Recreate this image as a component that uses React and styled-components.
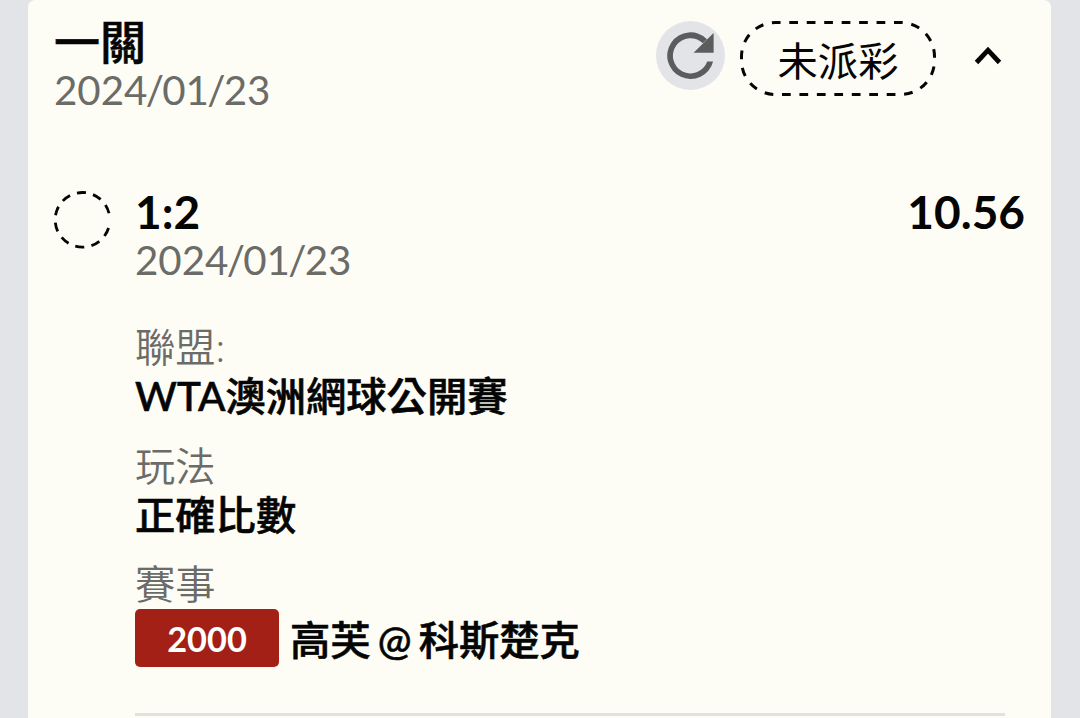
import { Fragment, useState } from 'react';
import styled, { createGlobalStyle } from 'styled-components';

const palette = {
  page: '#e3e4e7',
  card: '#fdfdf5',
  text: '#050505',
  muted: '#6b6b68',
  icon: '#5c5c5e',
  red: '#a32017',
  line: '#e2e2dd',
};

const GlobalStyle = createGlobalStyle`
  * {
    box-sizing: border-box;
  }

  body {
    margin: 0;
    background: ${palette.page};
    font-family: Lato, 'Noto Sans CJK TC', sans-serif;
    overflow: hidden;
  }

  button {
    padding: 0;
    border: none;
    background: none;
    font: inherit;
    color: inherit;
  }
`;

const StyledCard = styled.main`
  width: 1023px;
  height: 718px;
  margin-left: 28px;
  padding: 17px 26px 0;
  background: ${palette.card};
  border-radius: 7px 7px 0 0;
  color: ${palette.text};
  overflow: hidden;
`;

const StyledHeader = styled.header`
  display: flex;
  justify-content: space-between;
  height: 170px;
`;

const Title = styled.h1`
  margin: 0;
  font-size: 46px;
  font-weight: ${({ weight }) => weight || 700};
  line-height: 49px;
  white-space: nowrap;
  -webkit-text-stroke: ${({ weight }) => (weight ? '0.6px' : '0')};
`;

const DateText = styled.div`
  font-size: 40.3px;
  line-height: 48px;
  color: ${palette.muted};
`;

const Slash = styled.span`
  margin: 0 -1.75px;
`;

const Actions = styled.div`
  display: flex;
  align-items: center;
  height: 75px;
  margin: 4px 21px 0 0;
`;

const RefreshButton = styled.button`
  display: flex;
  width: 69px;
  height: 69px;
  margin: 0 15px 6px 0;
  border-radius: 50%;
  background: ${palette.page};
`;

const StatusPill = styled.div`
  position: relative;
  display: flex;
  align-items: center;
  justify-content: center;
  width: 196px;
  height: 75px;
  margin-right: 36px;
  padding-top: 4px;
  font-size: 40.3px;
  line-height: 48px;

  svg {
    position: absolute;
    top: 0;
    left: 0;
  }
`;

const ToggleButton = styled.button`
  display: flex;
  width: 32px;
  height: 24px;
  margin-bottom: 5px;
`;

const Bet = styled.section`
  display: flex;
`;

const BetState = styled.div`
  flex: none;
  width: 81px;
  padding-top: 4px;

  svg {
    display: block;
  }
`;

const BetBody = styled.div`
  flex: 1;
`;

const BetHead = styled.div`
  display: flex;
  justify-content: space-between;
  margin-bottom: 39px;
`;

const Field = styled.div`
  margin-bottom: 21.5px;
`;

const Label = styled.div`
  font-size: 40.3px;
  font-weight: 350;
  line-height: 48px;
  color: ${palette.muted};
`;

const Value = styled.div`
  padding-top: 1px;
  font-size: 40.3px;
  font-weight: 500;
  line-height: 48px;
  word-spacing: -3px;
  white-space: nowrap;
  -webkit-text-stroke: 0.6px;
`;

const Match = styled.div`
  display: flex;
  align-items: center;
  gap: 11px;
  margin-top: 1px;

  ${Value} {
    padding-top: 3px;
  }
`;

const Badge = styled.span`
  width: 144px;
  height: 58px;
  border-radius: 5px;
  background: ${palette.red};
  color: #fff;
  font-size: 34.3px;
  font-weight: 700;
  line-height: 59px;
  text-align: center;
`;

const Divider = styled.hr`
  width: 870px;
  height: 3px;
  margin: 46px 0 0;
  border: none;
  background: ${palette.line};
`;

const RefreshIcon = () => (
  <svg width="69" height="69" viewBox="0 0 69 69" fill={palette.icon}>
    <path d="M51 18.2A23.3 23.3 0 1 0 57.1 40.4H51.2A17.6 17.6 0 1 1 46.9 22.3Z" />
    <path d="M57.6 12V31.7H37.6Z" />
  </svg>
);

const PillOutline = () => (
  <svg width="196" height="75" viewBox="0 0 196 75" fill="none" stroke={palette.text}>
    <rect
      x="1.5"
      y="1.5"
      width="193"
      height="72"
      rx="34"
      strokeWidth="3"
      pathLength="27"
      strokeDasharray="0.5 0.5"
      strokeDashoffset="-0.79"
    />
  </svg>
);

// 점선 원: 마지막 간격만 조금 넓다
const PendingCircle = () => (
  <svg width="58" height="58" viewBox="0 0 58 58" fill="none" stroke={palette.text}>
    <circle
      cx="28.5"
      cy="28.8"
      r="27.3"
      strokeWidth="2.8"
      pathLength="360"
      strokeDasharray={`${'19 15.4 '.repeat(9)}19 31.4`}
      transform="rotate(17.5 28.5 28.8)"
    />
  </svg>
);

const Chevron = ({ isOpen }) => (
  <svg width="32" height="24" viewBox="0 0 32 24" fill="none" stroke={palette.text} strokeWidth="4.8">
    <path d={isOpen ? 'M4.5 18.5 16 6.2 27.5 18.5' : 'M4.5 6.2 16 18.5 27.5 6.2'} />
  </svg>
);

const BetDate = ({ value }) => (
  <DateText>
    {value.split('/').map((part, i) => (
      <Fragment key={i}>
        {i > 0 && <Slash>/</Slash>}
        {part}
      </Fragment>
    ))}
  </DateText>
);

const fields = [
  { label: '聯盟:', value: 'WTA澳洲網球公開賽' },
  { label: '玩法', value: '正確比數' },
];

const App = () => {
  const [isOpen, setIsOpen] = useState(true);

  return (
    <>
      <GlobalStyle />
      <StyledCard>
        <StyledHeader>
          <div>
            <Title weight={500}>一關</Title>
            <BetDate value="2024/01/23" />
          </div>
          <Actions>
            <RefreshButton aria-label="refresh">
              <RefreshIcon />
            </RefreshButton>
            <StatusPill>
              <PillOutline />
              未派彩
            </StatusPill>
            <ToggleButton aria-label="toggle" onClick={() => setIsOpen(!isOpen)}>
              <Chevron isOpen={isOpen} />
            </ToggleButton>
          </Actions>
        </StyledHeader>
        {isOpen && (
          <Bet>
            <BetState>
              <PendingCircle />
            </BetState>
            <BetBody>
              <BetHead>
                <div>
                  <Title as="h2">1:2</Title>
                  <BetDate value="2024/01/23" />
                </div>
                <Title as="span">10.56</Title>
              </BetHead>
              {fields.map(({ label, value }) => (
                <Field key={label}>
                  <Label>{label}</Label>
                  <Value>{value}</Value>
                </Field>
              ))}
              <Label>賽事</Label>
              <Match>
                <Badge>2000</Badge>
                <Value>高芙 @ 科斯楚克</Value>
              </Match>
              <Divider />
            </BetBody>
          </Bet>
        )}
      </StyledCard>
    </>
  );
};

export default App;
